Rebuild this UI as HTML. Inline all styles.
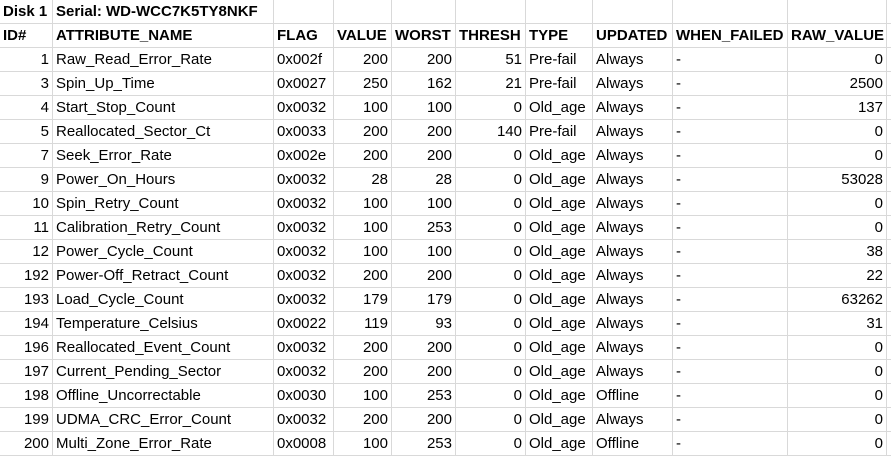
<!DOCTYPE html>
<html><head><meta charset="utf-8"><style>
body{margin:0;background:#fff;width:891px;height:456px;overflow:hidden;position:relative}
table{border-collapse:collapse;table-layout:fixed;width:897px;font-family:"Liberation Sans",Arial,sans-serif;font-size:15px;color:#000;position:absolute;left:-1px;top:-1px}
td{border:1px solid #d9d9d9;height:23px;padding:0 3px 0 3px;white-space:nowrap;overflow:hidden;line-height:23px;box-sizing:border-box}
tr{height:24px}
tr:first-child{height:23px}
.r{text-align:right}
.b td{font-weight:bold}
</style></head><body>
<table>
<colgroup><col style="width:53px"><col style="width:221px"><col style="width:60px"><col style="width:58px"><col style="width:64px"><col style="width:70px"><col style="width:67px"><col style="width:80px"><col style="width:115px"><col style="width:99px"><col style="width:10px"></colgroup>
<tr class="b"><td>Disk 1</td><td>Serial: WD-WCC7K5TY8NKF</td><td></td><td></td><td></td><td></td><td></td><td></td><td></td><td></td><td></td></tr>
<tr class="b"><td>ID#</td><td>ATTRIBUTE_NAME</td><td>FLAG</td><td>VALUE</td><td>WORST</td><td>THRESH</td><td>TYPE</td><td>UPDATED</td><td>WHEN_FAILED</td><td>RAW_VALUE</td><td></td></tr>
<tr><td class="r">1</td><td>Raw_Read_Error_Rate</td><td>0x002f</td><td class="r">200</td><td class="r">200</td><td class="r">51</td><td>Pre-fail</td><td>Always</td><td>-</td><td class="r">0</td><td></td></tr>
<tr><td class="r">3</td><td>Spin_Up_Time</td><td>0x0027</td><td class="r">250</td><td class="r">162</td><td class="r">21</td><td>Pre-fail</td><td>Always</td><td>-</td><td class="r">2500</td><td></td></tr>
<tr><td class="r">4</td><td>Start_Stop_Count</td><td>0x0032</td><td class="r">100</td><td class="r">100</td><td class="r">0</td><td>Old_age</td><td>Always</td><td>-</td><td class="r">137</td><td></td></tr>
<tr><td class="r">5</td><td>Reallocated_Sector_Ct</td><td>0x0033</td><td class="r">200</td><td class="r">200</td><td class="r">140</td><td>Pre-fail</td><td>Always</td><td>-</td><td class="r">0</td><td></td></tr>
<tr><td class="r">7</td><td>Seek_Error_Rate</td><td>0x002e</td><td class="r">200</td><td class="r">200</td><td class="r">0</td><td>Old_age</td><td>Always</td><td>-</td><td class="r">0</td><td></td></tr>
<tr><td class="r">9</td><td>Power_On_Hours</td><td>0x0032</td><td class="r">28</td><td class="r">28</td><td class="r">0</td><td>Old_age</td><td>Always</td><td>-</td><td class="r">53028</td><td></td></tr>
<tr><td class="r">10</td><td>Spin_Retry_Count</td><td>0x0032</td><td class="r">100</td><td class="r">100</td><td class="r">0</td><td>Old_age</td><td>Always</td><td>-</td><td class="r">0</td><td></td></tr>
<tr><td class="r">11</td><td>Calibration_Retry_Count</td><td>0x0032</td><td class="r">100</td><td class="r">253</td><td class="r">0</td><td>Old_age</td><td>Always</td><td>-</td><td class="r">0</td><td></td></tr>
<tr><td class="r">12</td><td>Power_Cycle_Count</td><td>0x0032</td><td class="r">100</td><td class="r">100</td><td class="r">0</td><td>Old_age</td><td>Always</td><td>-</td><td class="r">38</td><td></td></tr>
<tr><td class="r">192</td><td>Power-Off_Retract_Count</td><td>0x0032</td><td class="r">200</td><td class="r">200</td><td class="r">0</td><td>Old_age</td><td>Always</td><td>-</td><td class="r">22</td><td></td></tr>
<tr><td class="r">193</td><td>Load_Cycle_Count</td><td>0x0032</td><td class="r">179</td><td class="r">179</td><td class="r">0</td><td>Old_age</td><td>Always</td><td>-</td><td class="r">63262</td><td></td></tr>
<tr><td class="r">194</td><td>Temperature_Celsius</td><td>0x0022</td><td class="r">119</td><td class="r">93</td><td class="r">0</td><td>Old_age</td><td>Always</td><td>-</td><td class="r">31</td><td></td></tr>
<tr><td class="r">196</td><td>Reallocated_Event_Count</td><td>0x0032</td><td class="r">200</td><td class="r">200</td><td class="r">0</td><td>Old_age</td><td>Always</td><td>-</td><td class="r">0</td><td></td></tr>
<tr><td class="r">197</td><td>Current_Pending_Sector</td><td>0x0032</td><td class="r">200</td><td class="r">200</td><td class="r">0</td><td>Old_age</td><td>Always</td><td>-</td><td class="r">0</td><td></td></tr>
<tr><td class="r">198</td><td>Offline_Uncorrectable</td><td>0x0030</td><td class="r">100</td><td class="r">253</td><td class="r">0</td><td>Old_age</td><td>Offline</td><td>-</td><td class="r">0</td><td></td></tr>
<tr><td class="r">199</td><td>UDMA_CRC_Error_Count</td><td>0x0032</td><td class="r">200</td><td class="r">200</td><td class="r">0</td><td>Old_age</td><td>Always</td><td>-</td><td class="r">0</td><td></td></tr>
<tr><td class="r">200</td><td>Multi_Zone_Error_Rate</td><td>0x0008</td><td class="r">100</td><td class="r">253</td><td class="r">0</td><td>Old_age</td><td>Offline</td><td>-</td><td class="r">0</td><td></td></tr>
</table>
</body></html>
